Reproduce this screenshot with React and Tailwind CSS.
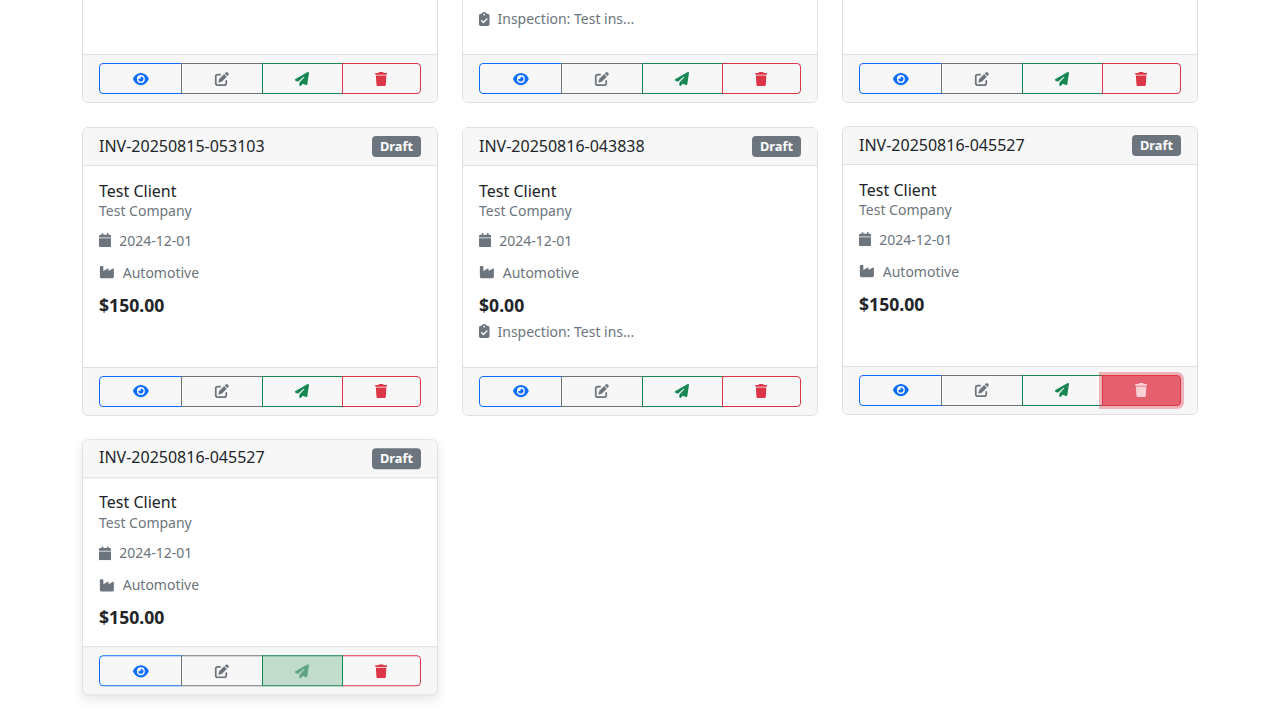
import React from 'react'
import { FaEye, FaPenToSquare, FaPaperPlane, FaTrash, FaCalendar, FaIndustry, FaClipboardCheck } from 'react-icons/fa6'

const invoices = [
  { id: 'INV-20250815-053100', total: '$150.00' },
  { id: 'INV-20250815-053101', total: '$0.00', inspection: true },
  { id: 'INV-20250815-053102', total: '$150.00' },
  { id: 'INV-20250815-053103', total: '$150.00' },
  { id: 'INV-20250816-043838', total: '$0.00', inspection: true },
  { id: 'INV-20250816-045527', total: '$150.00', hover: 'delete' },
  { id: 'INV-20250816-045527', total: '$150.00', hover: 'send' },
]

function InvoiceCard({ invoice }) {
  const { id, total, inspection, hover } = invoice

  let cardClass = 'flex flex-col bg-white border border-[#dfdfdf] rounded-md overflow-hidden'
  if (hover === 'delete') cardClass += ' -translate-y-px'
  if (hover === 'send') cardClass += ' -translate-y-[0.75px] shadow-[0_4px_12px_rgba(0,0,0,0.1)]'

  return (
    <div className={cardClass}>
      <div className="flex items-center justify-between h-[38px] px-4 bg-[#f7f7f7] border-b border-[#dfdfdf]">
        <span className="text-base text-[#212529] mb-[2px]">{id}</span>
        <span className="bg-[#6c757d] text-white text-[12.8px] font-bold leading-[13px] px-[8px] pt-[4px] pb-[4px] rounded">Draft</span>
      </div>

      <div className="flex-1 pt-[15.5px] px-4 pb-[15px] text-[#6c757d] text-sm">
        <div className="text-base leading-[19px] text-[#212529]">Test Client</div>
        <div className={hover === 'send' ? 'leading-[21px] mb-[9px]' : 'leading-[21px] -mt-px mb-[9px]'}>Test Company</div>
        <div className="flex items-center leading-[21px] mb-[11px]">
          <FaCalendar className="mr-2 w-[12.25px] h-[14px]" />
          2024-12-01
        </div>
        <div className="flex items-center leading-[21px] mb-[9px]">
          <FaIndustry className="mr-2 w-[15.75px] h-[14px]" />
          Automotive
        </div>
        <div className="text-[17.6px] font-bold leading-[27px] text-[#212529]">{total}</div>
        {inspection && (
          <div className="flex items-center leading-[21px] mt-[2px] mb-[10px]">
            <FaClipboardCheck className="mr-2 w-[10.5px] h-[14px]" />
            Inspection: Test ins...
          </div>
        )}
      </div>

      <div className="p-2 px-4 bg-[#f7f7f7] border-t border-[#dfdfdf]">
        <div className="flex h-[31px] text-sm">
          <button type="button" className="flex-auto flex items-center justify-center px-2 text-[#0d6efd] border border-[#0d6efd] rounded-l">
            <FaEye className="ml-px w-[15.75px] h-[14px]" />
          </button>
          <button type="button" className="flex-auto flex items-center justify-center px-2 -ml-px text-[#6c757d] border border-[#6c757d]">
            <FaPenToSquare className="w-[15.75px] h-[14px]" />
          </button>
          {hover === 'send' ? (
            <button type="button" className="relative z-10 flex-auto flex items-center justify-center px-2 -ml-px text-[#5fa585] bg-[#c1dccd] border border-[#198754]">
              <FaPaperPlane className="mr-px w-[14px] h-[14px]" />
            </button>
          ) : (
            <button type="button" className="relative flex-auto flex items-center justify-center px-2 -ml-px text-[#198754] border border-[#198754]">
              <FaPaperPlane className="mr-px w-[14px] h-[14px]" />
            </button>
          )}
          {hover === 'delete' ? (
            <button type="button" className="relative z-10 flex-auto flex items-center justify-center px-2 -ml-px text-[#f9d0d5] bg-[#e5606e] border border-[#dc3545] rounded-r shadow-[0_0_0_3px_rgba(220,53,69,0.35)]">
              <FaTrash className="mr-px w-[12.25px] h-[14px]" />
            </button>
          ) : (
            <button type="button" className="relative flex-auto flex items-center justify-center px-2 -ml-px text-[#dc3545] border border-[#dc3545] rounded-r">
              <FaTrash className="mr-px w-[12.25px] h-[14px]" />
            </button>
          )}
        </div>
      </div>
    </div>
  )
}

export default function App() {
  return (
    <div className="h-[720px] overflow-hidden bg-white font-['Noto_Sans',sans-serif]">
      <div className="grid grid-cols-3 gap-6 w-[1116px] ml-[82px] -mt-[185.25px]">
        {invoices.map((invoice, index) => (
          <InvoiceCard key={index} invoice={invoice} />
        ))}
      </div>
    </div>
  )
}
